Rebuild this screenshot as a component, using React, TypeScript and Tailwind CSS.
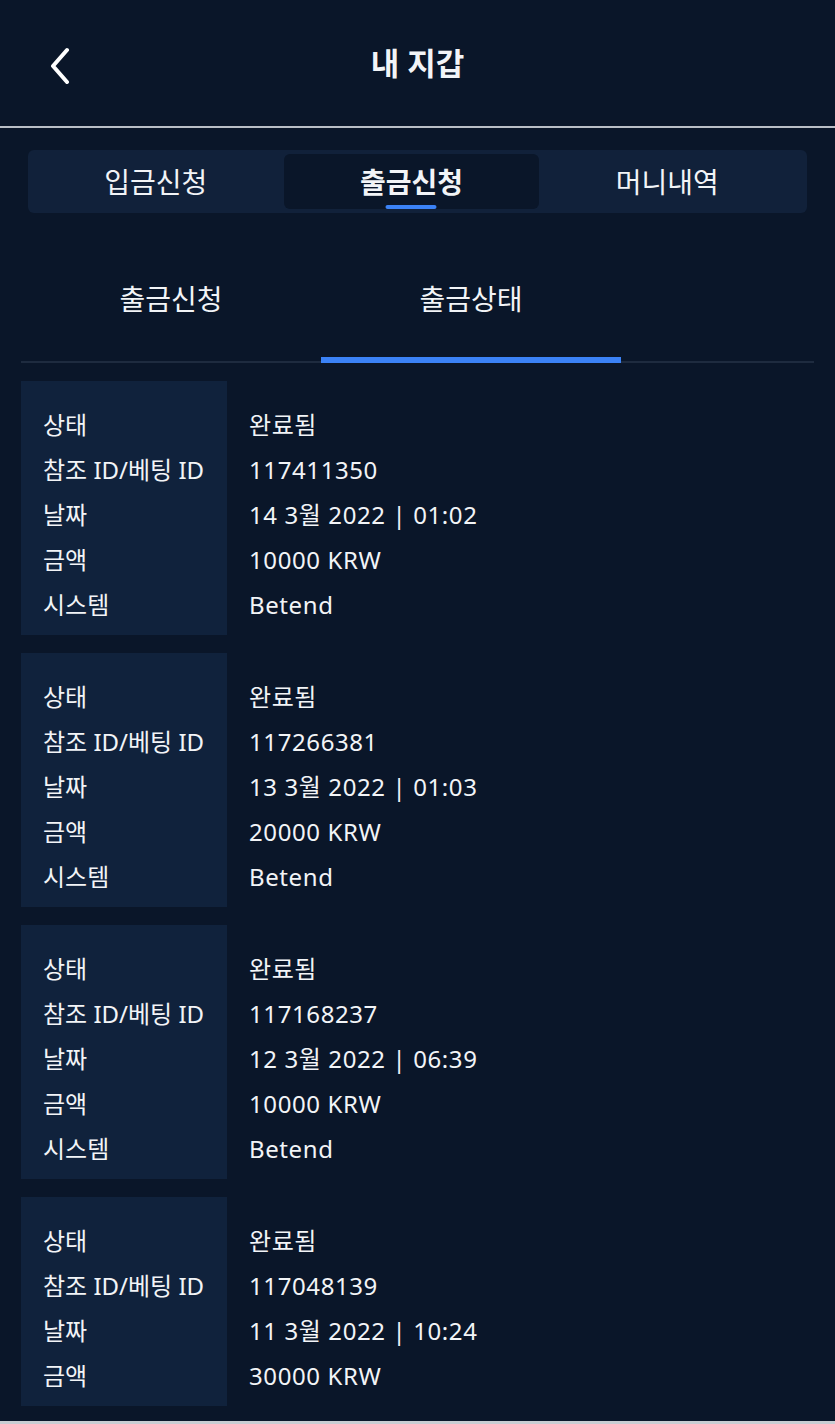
import { useState } from "react";

type Withdrawal = {
  status: string;
  refId: string;
  date: string;
  amount: string;
  system?: string;
};

const WITHDRAWALS: Withdrawal[] = [
  { status: "완료됨", refId: "117411350", date: "14 3월 2022 | 01:02", amount: "10000 KRW", system: "Betend" },
  { status: "완료됨", refId: "117266381", date: "13 3월 2022 | 01:03", amount: "20000 KRW", system: "Betend" },
  { status: "완료됨", refId: "117168237", date: "12 3월 2022 | 06:39", amount: "10000 KRW", system: "Betend" },
  { status: "완료됨", refId: "117048139", date: "11 3월 2022 | 10:24", amount: "30000 KRW" },
];

const TOP_TABS = ["입금신청", "출금신청", "머니내역"];
const SUB_TABS = ["출금신청", "출금상태"];

function WithdrawalCard({ item }: { item: Withdrawal }) {
  const rows: [string, string][] = [
    ["상태", item.status],
    ["참조 ID/베팅 ID", item.refId],
    ["날짜", item.date],
    ["금액", item.amount],
  ];
  if (item.system) rows.push(["시스템", item.system]);

  return (
    <div className="flex">
      <div className="w-[206px] shrink-0 bg-[#10223c] pb-[8px] pl-[22px] pt-[21px]">
        {rows.map(([label]) => (
          <div key={label} className="flex h-[45px] items-center whitespace-nowrap">
            {label}
          </div>
        ))}
      </div>
      <div className="flex-1 pb-[8px] pl-[22px] pt-[21px] tracking-[0.025em]">
        {rows.map(([label, value]) => (
          <div key={label} className="flex h-[45px] items-center">
            {value}
          </div>
        ))}
      </div>
    </div>
  );
}

export default function App() {
  const [topTab, setTopTab] = useState(1);
  const [subTab, setSubTab] = useState(1);

  return (
    <div
      className="min-h-[1424px] w-full bg-[#0a1629] text-[#f2f4f7]"
      style={{ fontFamily: '"Noto Sans", "Noto Sans CJK KR", sans-serif' }}
    >
      <header className="relative flex h-[126px] items-center justify-center">
        <button type="button" className="absolute left-[42px] top-[40px] p-1" aria-label="Back">
          <svg width="28" height="40" viewBox="0 0 28 40" fill="none">
            <path d="M21 6 L7 22 L21 38" stroke="white" strokeWidth="4" strokeLinecap="round" strokeLinejoin="round" />
          </svg>
        </button>
        <h1 className="text-[31px] font-bold">내 지갑</h1>
      </header>
      <div className="h-[2px] bg-[#b9bec6]" />

      <div className="mx-[28px] mt-[22px] grid h-[63px] grid-cols-3 rounded-md bg-[#11213a] py-[4px] pr-[12px]">
        {TOP_TABS.map((tab, i) => (
          <button
            key={tab}
            type="button"
            onClick={() => setTopTab(i)}
            className={
              i === topTab
                ? "relative flex items-center justify-center rounded-md bg-[#0a1629] text-[28px] font-bold"
                : "flex items-center justify-center text-[28px]"
            }
          >
            {tab}
            {i === topTab && (
              <span className="absolute bottom-0 left-1/2 h-[4px] w-[51px] -translate-x-1/2 rounded-full bg-[#3b82f6]" />
            )}
          </button>
        ))}
      </div>

      <div className="mx-[21px] mt-[27px] flex border-b-2 border-[#1e2b3f]">
        {SUB_TABS.map((tab, i) => (
          <button
            key={tab}
            type="button"
            onClick={() => setSubTab(i)}
            className={
              i === subTab
                ? "-mb-[2px] flex h-[123px] w-[300px] items-start justify-center border-b-[6px] border-[#3b82f6] pt-[38px] text-[28px]"
                : "flex h-[121px] w-[300px] items-start justify-center pt-[38px] text-[28px]"
            }
          >
            {tab}
          </button>
        ))}
      </div>

      <div className="mx-[21px] mt-[18px] flex flex-col gap-[18px] text-[24px]">
        {WITHDRAWALS.map((item) => (
          <WithdrawalCard key={item.refId} item={item} />
        ))}
      </div>

      <div className="mt-[15px] h-[4px] bg-[#c9cdd3]" />
    </div>
  );
}
